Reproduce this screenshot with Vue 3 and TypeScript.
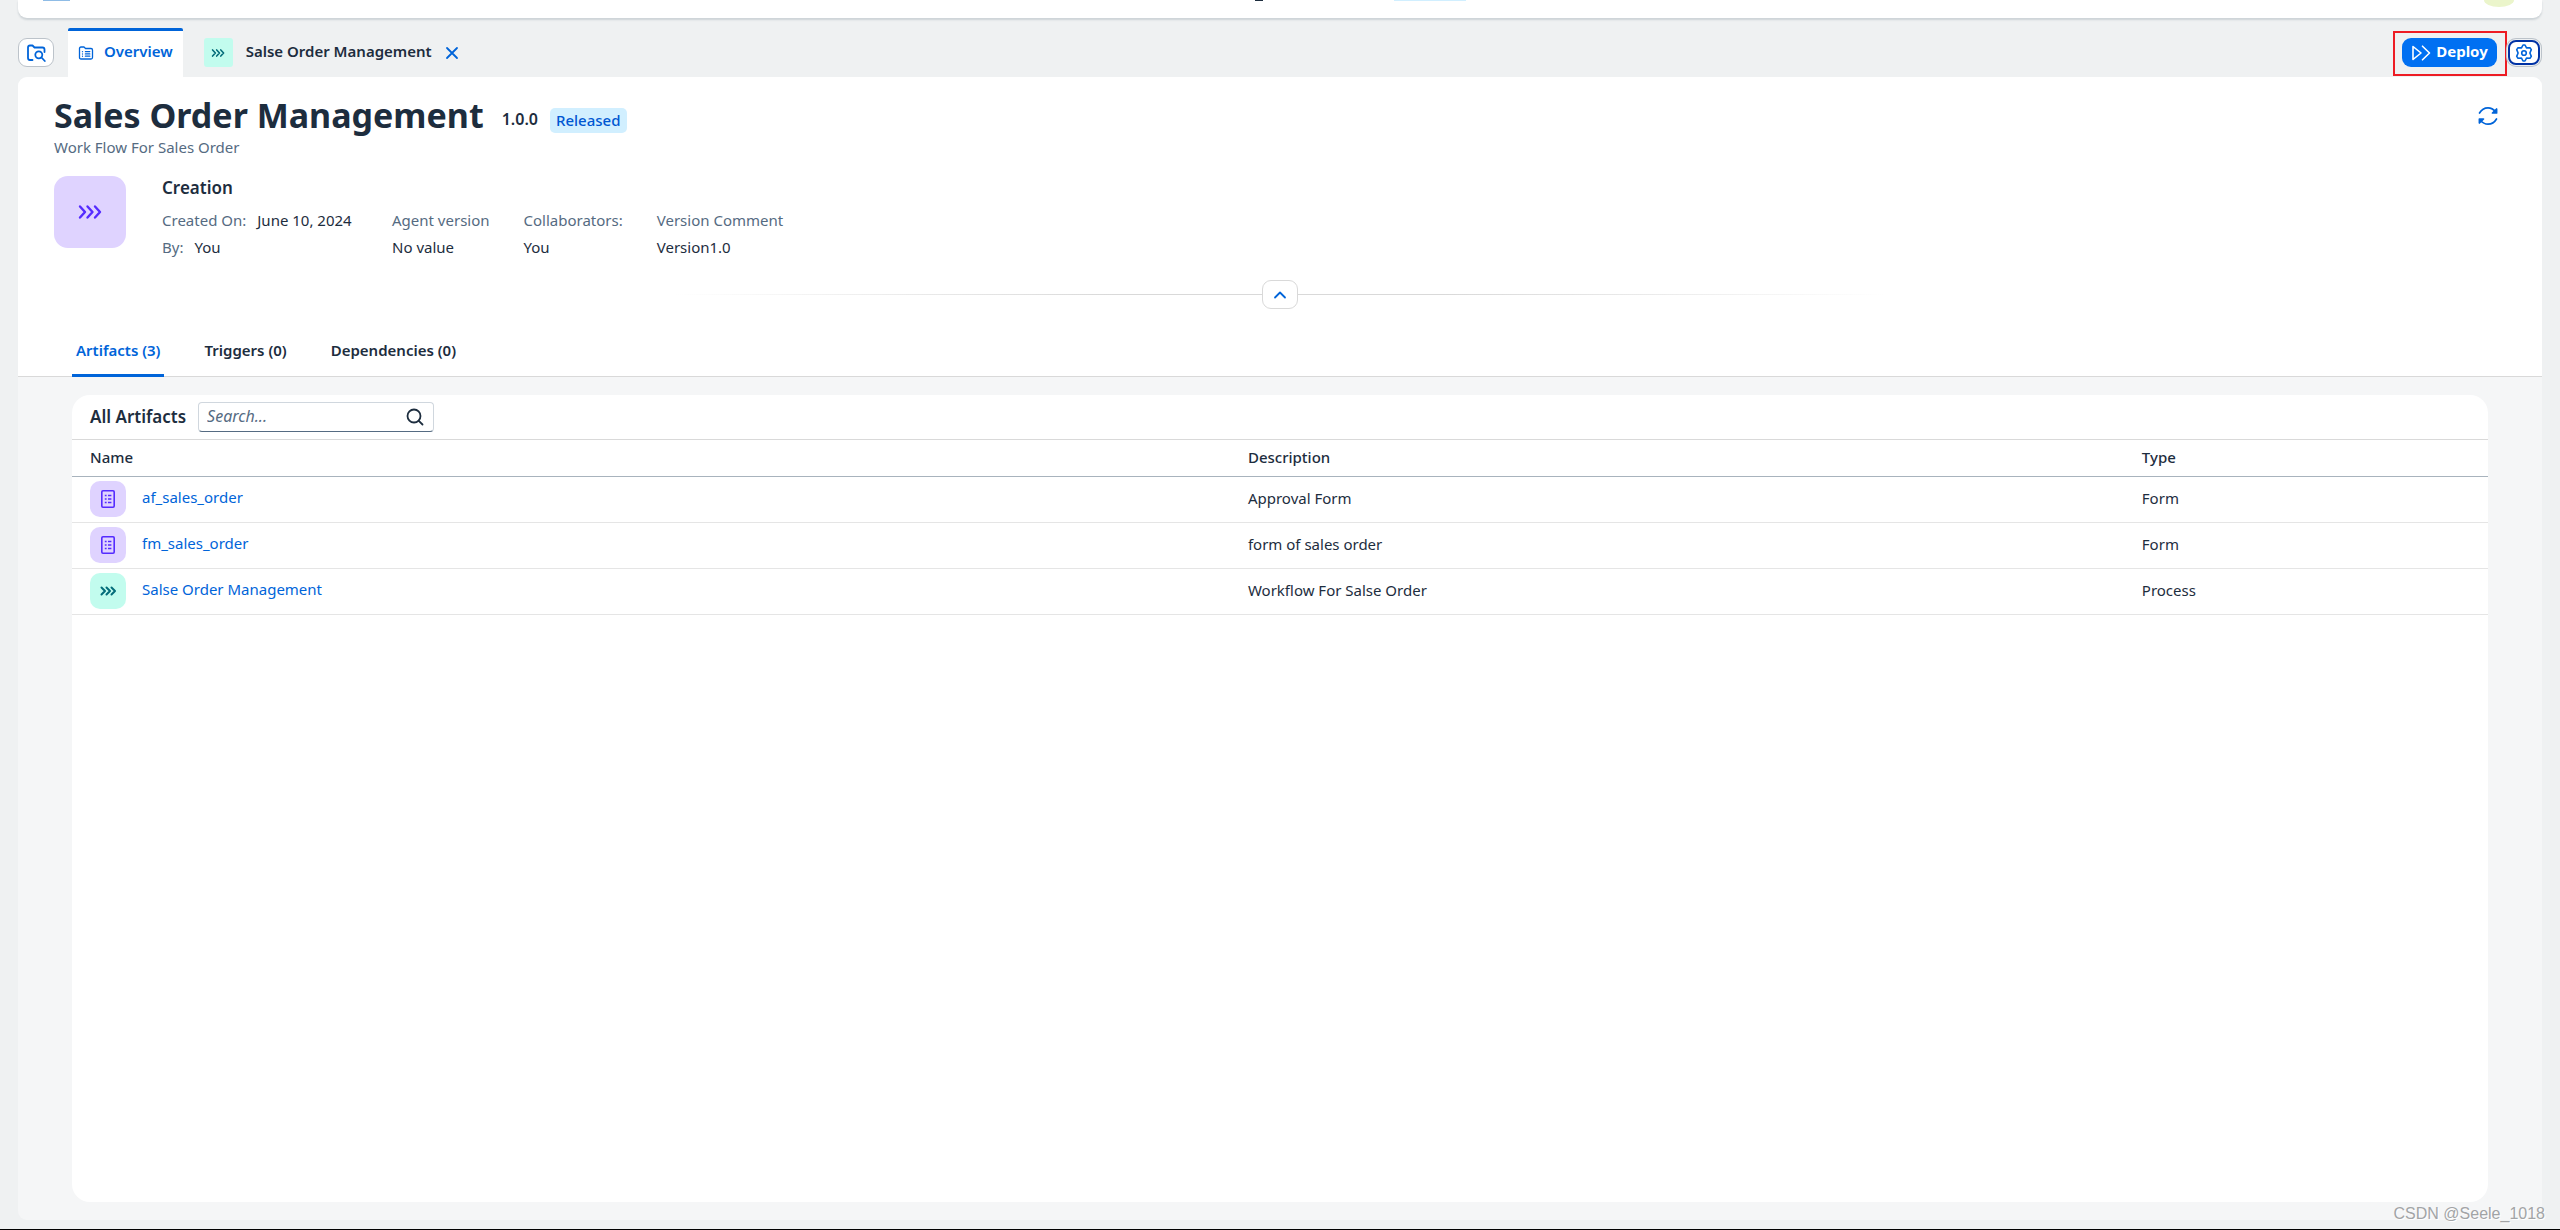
<script setup lang="ts">
import { ref } from 'vue'

type Kind = 'form' | 'process'

interface Artifact {
  name: string
  description: string
  type: string
  kind: Kind
}

interface Fact {
  label: string
  value: string
}

const query = ref('')

const facts: Fact[] = [
  { label: 'Agent version', value: 'No value' },
  { label: 'Collaborators:', value: 'You' },
  { label: 'Version Comment', value: 'Version1.0' },
]

const sections: string[] = ['Artifacts (3)', 'Triggers (0)', 'Dependencies (0)']

const artifacts: Artifact[] = [
  { name: 'af_sales_order', description: 'Approval Form', type: 'Form', kind: 'form' },
  { name: 'fm_sales_order', description: 'form of sales order', type: 'Form', kind: 'form' },
  { name: 'Salse Order Management', description: 'Workflow For Salse Order', type: 'Process', kind: 'process' },
]
</script>

<template>
  <div class="page">
    <header class="shell">
      <span class="shell-logo"></span>
      <span class="shell-mark"></span>
      <span class="shell-pill"></span>
      <span class="shell-avatar"></span>
    </header>

    <nav class="strip" aria-label="Open editors">
      <button class="finder" type="button" aria-label="Browse project">
        <svg viewBox="0 0 20 20" width="20" height="20" fill="none" stroke="currentColor" stroke-width="1.800" stroke-linecap="round" stroke-linejoin="round">
          <path d="M6.500 17H4Q2 17 2 15V4.500Q2 2.500 4 2.500H6.500L8.500 4.500H16.500Q18.500 4.500 18.500 6.500V9" />
          <circle cx="12.800" cy="11.800" r="3.500" />
          <path d="M15.500 14.500L18.800 18" />
        </svg>
      </button>
      <a class="tab active" href="#overview">
        <svg viewBox="0 0 16 16" width="16" height="16" fill="none" stroke="currentColor" stroke-width="1.300" stroke-linecap="round" stroke-linejoin="round">
          <path d="M1.500 3.500Q1.500 2 3 2H6L7.500 3.500H13Q14.500 3.500 14.500 5V12.500Q14.500 14 13 14H3Q1.500 14 1.500 12.500Z" />
          <path d="M4.500 6.600V6.700M4.500 8.900V9M4.500 11.200V11.300M7.400 6.600H11.800M7.400 8.900H11.800M7.400 11.200H11.800" />
        </svg>
        <span class="label">Overview</span>
      </a>
      <div class="tab">
        <span class="tab-tile teal">
          <svg viewBox="0 0 16 16" width="14" height="14" fill="none" stroke="currentColor" stroke-width="1.800" stroke-linecap="round" stroke-linejoin="round">
            <path d="M1.800 4.500L5 8L1.800 11.500M6.500 4.500L9.700 8L6.500 11.500M11.200 4.500L14.400 8L11.200 11.500" />
          </svg>
        </span>
        <a class="label" href="#process">Salse Order Management</a>
        <button class="close" type="button" aria-label="Close tab">
          <svg viewBox="0 0 14 14" width="14" height="14" fill="none" stroke="currentColor" stroke-width="1.800" stroke-linecap="round">
            <path d="M2 2L12 12M12 2L2 12" />
          </svg>
        </button>
      </div>
      <div class="deploy-frame">
        <button class="deploy" type="button">
          <svg viewBox="0 0 20 18" width="20" height="18" fill="none" stroke="currentColor" stroke-width="1.600" stroke-linecap="round" stroke-linejoin="round">
            <path d="M2 2.500V15.500L10 9Z" />
            <path d="M11.500 2.200L18.500 9L11.500 15.800" />
          </svg>
          <span class="label">Deploy</span>
        </button>
      </div>
      <button class="settings" type="button" aria-label="Settings">
        <svg viewBox="0 0 18 18" width="18" height="18" fill="none" stroke="currentColor" stroke-width="1.600" stroke-linejoin="round">
          <path d="M8 1H10L11.500 3.900L15 3.800L16.300 5.600L14.900 9L16.300 12.400L15 14.200L11.500 14.100L10 17H8L6.500 14.100L3 14.200L1.700 12.400L3.100 9L1.700 5.600L3 3.800L6.500 3.900Z" />
          <circle cx="9" cy="9" r="2.300" />
        </svg>
      </button>
    </nav>

    <main class="panel">
      <section class="head">
        <div class="title-row">
          <h1>Sales Order Management</h1>
          <span class="version">1.0.0</span>
          <span class="badge">Released</span>
          <button class="refresh" type="button" aria-label="Refresh">
            <svg viewBox="0 0 20 20" width="20" height="20" fill="none" stroke="currentColor" stroke-width="1.700" stroke-linecap="round" stroke-linejoin="round">
              <path d="M1.500 7C3.500 3.500 6.500 1.800 10 1.800C13.300 1.800 15.800 3.500 18 6" />
              <path d="M18.600 3V7H14.500Z" fill="currentColor" />
              <path d="M18.500 13C16.500 16.500 13.500 18.200 10 18.200C6.700 18.200 4.200 16.500 2 14" />
              <path d="M1.400 17V13H5.500Z" fill="currentColor" />
            </svg>
          </button>
        </div>
        <p class="subtitle">Work Flow For Sales Order</p>

        <div class="info">
          <span class="project-tile">
            <svg viewBox="0 0 28 20" width="28" height="20" fill="none" stroke="currentColor" stroke-width="2.400" stroke-linecap="round" stroke-linejoin="round">
              <path d="M4 4.500L9 10L4 15.500M11.500 4.500L16.500 10L11.500 15.500M19 4.500L24 10L19 15.500" />
            </svg>
          </span>
          <div class="creation">
            <h2>Creation</h2>
            <div class="facts">
              <dl class="lines">
                <div><dt>Created On:</dt><dd>June 10, 2024</dd></div>
                <div><dt>By:</dt><dd>You</dd></div>
              </dl>
              <dl v-for="fact in facts" :key="fact.label">
                <dt>{{ fact.label }}</dt>
                <dd>{{ fact.value }}</dd>
              </dl>
            </div>
          </div>
        </div>

        <div class="fold">
          <span class="fold-line left"></span>
          <button class="fold-button" type="button" aria-label="Collapse header">
            <svg viewBox="0 0 14 14" width="14" height="14" fill="none" stroke="currentColor" stroke-width="1.800" stroke-linecap="round" stroke-linejoin="round">
              <path d="M2 9.500L7 4.500L12 9.500" />
            </svg>
          </button>
          <span class="fold-line right"></span>
        </div>

        <nav class="sections" aria-label="Sections">
          <a v-for="(section, i) in sections" :key="section" href="#artifacts" :class="{ current: i === 0 }">{{ section }}</a>
        </nav>
      </section>

      <section class="body">
        <div class="card">
          <div class="toolbar">
            <h2>All Artifacts</h2>
            <label class="search">
              <input v-model="query" type="text" placeholder="Search..." aria-label="Search artifacts" />
              <svg viewBox="0 0 18 18" width="18" height="18" fill="none" stroke="currentColor" stroke-width="1.800" stroke-linecap="round">
                <circle cx="8" cy="8" r="6.500" />
                <path d="M12.800 12.800L16.500 16.500" />
              </svg>
            </label>
          </div>
          <table>
            <colgroup>
              <col class="col-name" />
              <col class="col-description" />
              <col />
            </colgroup>
            <thead>
              <tr>
                <th scope="col">Name</th>
                <th scope="col">Description</th>
                <th scope="col">Type</th>
              </tr>
            </thead>
            <tbody>
              <tr v-for="item in artifacts" :key="item.name">
                <td>
                  <div class="name-cell">
                    <span class="row-tile" :class="item.kind === 'form' ? 'violet' : 'teal'">
                      <svg v-if="item.kind === 'form'" viewBox="0 0 14 18" width="14" height="18" fill="none" stroke="currentColor" stroke-width="1.600" stroke-linejoin="round">
                        <rect x=".8" y=".8" width="12.400" height="16.400" rx="1.200" />
                        <path d="M3.800 5.500H5.600M7 5.500H10.400M3.800 9H5.600M7 9H10.400M3.800 12.500H5.600M7 12.500H10.400" />
                      </svg>
                      <svg v-else viewBox="0 0 18 18" width="18" height="18" fill="none" stroke="currentColor" stroke-width="2" stroke-linecap="round" stroke-linejoin="round">
                        <path d="M2.500 5.500L6 9L2.500 12.500M7.500 5.500L11 9L7.500 12.500M12.500 5.500L16 9L12.500 12.500" />
                      </svg>
                    </span>
                    <a class="label" href="#artifact">{{ item.name }}</a>
                  </div>
                </td>
                <td>{{ item.description }}</td>
                <td>{{ item.type }}</td>
              </tr>
            </tbody>
          </table>
        </div>
      </section>
    </main>

    <span class="watermark">CSDN @Seele_1018</span>
  </div>
</template>

<style>
body {
  margin: 0;
  background: #eff1f2;
}
</style>

<style scoped>
.page {
  box-sizing: border-box;
  position: relative;
  display: flex;
  flex-direction: column;
  min-height: 100vh;
  padding: 0 18px 9px;
  border-bottom: 1px solid #000;
  background: #eff1f2;
  color: #1d2d3e;
  font-family: "Noto Sans", "Open Sans", sans-serif;
  font-size: 15px;
  line-height: 21px;
}

h1,
h2,
p,
dl,
dd {
  margin: 0;
}

a {
  color: inherit;
  text-decoration: none;
}

button {
  display: flex;
  align-items: center;
  justify-content: center;
  box-sizing: border-box;
  padding: 0;
  border: 0;
  background: none;
  color: #0064d9;
  font: inherit;
}

svg {
  display: block;
  flex: none;
}

.label {
  padding-bottom: 2px;
}

.shell {
  position: relative;
  height: 18px;
  border-radius: 0 0 9px 9px;
  background: #fff;
  box-shadow: 0 2px 2px rgba(34, 53, 72, 0.16);
}

.shell span {
  position: absolute;
  top: 0;
}

.shell-logo {
  left: 1%;
  width: 27px;
  height: 1px;
  background: #8fbce6;
}

.shell-mark {
  left: 49%;
  width: 8px;
  height: 1px;
  background: #1d2d3e;
}

.shell-pill {
  left: 54.5%;
  width: 72px;
  height: 1px;
  background: #d1efff;
}

.shell-avatar {
  right: 28px;
  width: 30px;
  height: 7px;
  border-radius: 0 0 50% 50% / 0 0 100% 100%;
  background: #ebf5cb;
}

.strip {
  display: flex;
  align-items: center;
  height: 49px;
  margin-top: 10px;
}

.finder {
  width: 36px;
  height: 29px;
  margin-right: 14px;
  border: 1px solid #bcc3ca;
  border-radius: 9px;
  background: #fff;
}

.tab {
  box-sizing: border-box;
  display: flex;
  align-items: center;
  height: 49px;
  gap: 13px;
  margin-left: 21px;
  font-weight: 600;
}

.tab.active {
  gap: 10px;
  margin-left: 0;
  padding: 0 10px 3px;
  border-top: 3px solid #0064d9;
  border-radius: 2px 2px 0 0;
  background: #fff;
  color: #0064d9;
}

.tab-tile {
  display: flex;
  align-items: center;
  justify-content: center;
  width: 29px;
  height: 29px;
  border-radius: 3px;
}

.teal {
  background: #c2fcee;
  color: #046c7a;
}

.violet {
  background: #dfd3ff;
  color: #552cff;
}

.deploy-frame {
  margin-top: 2px;
  margin-left: auto;
  padding: 5px 8px 7px 7px;
  border: 2px solid #ed1c24;
}

.deploy {
  gap: 5px;
  width: 95px;
  height: 29px;
  border-radius: 9px;
  background: #0070f2;
  color: #fff;
  font-weight: 700;
}

.settings {
  width: 32px;
  height: 25px;
  margin: 0 2px 0 1px;
  border: 2px solid #0032a5;
  border-radius: 8px;
  background: #fff;
  box-shadow: 0 0 0 1px #eff1f2, 0 0 0 2px #bcc3ca;
}

.panel {
  display: flex;
  flex: 1;
  flex-direction: column;
  border-radius: 9px;
  background: #f5f6f7;
  overflow: hidden;
}

.head {
  padding: 18px 36px 0;
  border-bottom: 1px solid #d9d9d9;
  background: #fff;
}

.title-row {
  display: flex;
  align-items: center;
  height: 42px;
}

h1 {
  padding-bottom: 2px;
  font-size: 34px;
  font-weight: 700;
  line-height: 42px;
}

.version {
  margin: 6px 12px 0 18px;
  font-size: 16px;
  font-weight: 600;
}

.badge {
  margin-top: 8px;
  padding: 2px 6px;
  border-radius: 5px;
  background: #d1efff;
  color: #0057d2;
  font-weight: 500;
}

.refresh {
  width: 36px;
  height: 36px;
  margin-left: auto;
}

.subtitle {
  color: #556b82;
}

.info {
  display: flex;
  gap: 36px;
  padding-top: 18px;
}

.project-tile {
  display: flex;
  align-items: center;
  justify-content: center;
  width: 72px;
  height: 72px;
  border-radius: 14px;
  background: #dfd3ff;
  color: #552cff;
}

.creation h2 {
  font-size: 17px;
  font-weight: 600;
  line-height: 24px;
}

.facts {
  display: flex;
  gap: 34px;
  padding-top: 7px;
  line-height: 27px;
}

.lines {
  min-width: 196px;
}

.lines div {
  display: flex;
  gap: 11px;
}

dt {
  color: #556b82;
}

.fold {
  display: flex;
  align-items: center;
  justify-content: center;
  padding-top: 19px;
}

.fold-line {
  width: 24%;
  height: 1px;
}

.fold-line.left {
  background: linear-gradient(to left, #d9d9d9 25%, transparent);
}

.fold-line.right {
  background: linear-gradient(to right, #d9d9d9 25%, transparent);
}

.fold-button {
  width: 36px;
  height: 29px;
  border: 1px solid #d9d9d9;
  border-radius: 9px;
  background: #fff;
}

.sections {
  display: flex;
  gap: 36px;
  margin-bottom: -1px;
  padding: 18px 18px 0;
  font-weight: 600;
}

.sections a {
  padding: 13px 4px;
  border-bottom: 3px solid transparent;
}

.sections .current {
  border-color: #0064d9;
  color: #0064d9;
}

.body {
  display: flex;
  flex: 1;
  padding: 18px 54px;
}

.card {
  flex: 1;
  border-radius: 18px;
  background: #fff;
}

.toolbar {
  display: flex;
  align-items: center;
  gap: 12px;
  height: 44px;
  padding: 0 18px;
  border-bottom: 1px solid #d9d9d9;
}

.toolbar h2 {
  padding-bottom: 2px;
  font-size: 17px;
  font-weight: 600;
}

.search {
  box-sizing: border-box;
  display: flex;
  align-items: center;
  width: 236px;
  height: 30px;
  padding: 0 9px 0 8px;
  border: 1px solid #d0d7de;
  border-bottom-color: #556b82;
  border-radius: 4px;
}

.search input {
  flex: 1;
  min-width: 0;
  padding: 0 0 2px;
  border: 0;
  outline: 0;
  background: none;
  color: inherit;
  font: inherit;
  font-size: 16px;
}

.search input::placeholder {
  color: #556b82;
  font-style: italic;
  opacity: 1;
}

table {
  width: 100%;
  border-collapse: separate;
  border-spacing: 0;
  table-layout: fixed;
}

.col-name {
  width: 48.3%;
}

.col-description {
  width: 37%;
}

th,
td {
  height: 43px;
  padding: 0 9px 2px;
  border-bottom: 1px solid #e5e5e5;
  text-align: left;
}

th {
  height: 34px;
  border-bottom-color: #a8b3bd;
  font-weight: 500;
}

th:first-child,
td:first-child {
  padding-left: 18px;
}

.name-cell {
  display: flex;
  align-items: center;
  gap: 16px;
}

.name-cell a {
  color: #0064d9;
}

.row-tile {
  display: flex;
  align-items: center;
  justify-content: center;
  width: 36px;
  height: 36px;
  border-radius: 10px;
}

.watermark {
  position: absolute;
  right: 15px;
  bottom: 5px;
  color: #a2a4a6;
  font-family: "Liberation Sans", Arial, sans-serif;
  font-size: 16px;
  text-shadow: 1px 1px 0 #fff;
}
</style>
